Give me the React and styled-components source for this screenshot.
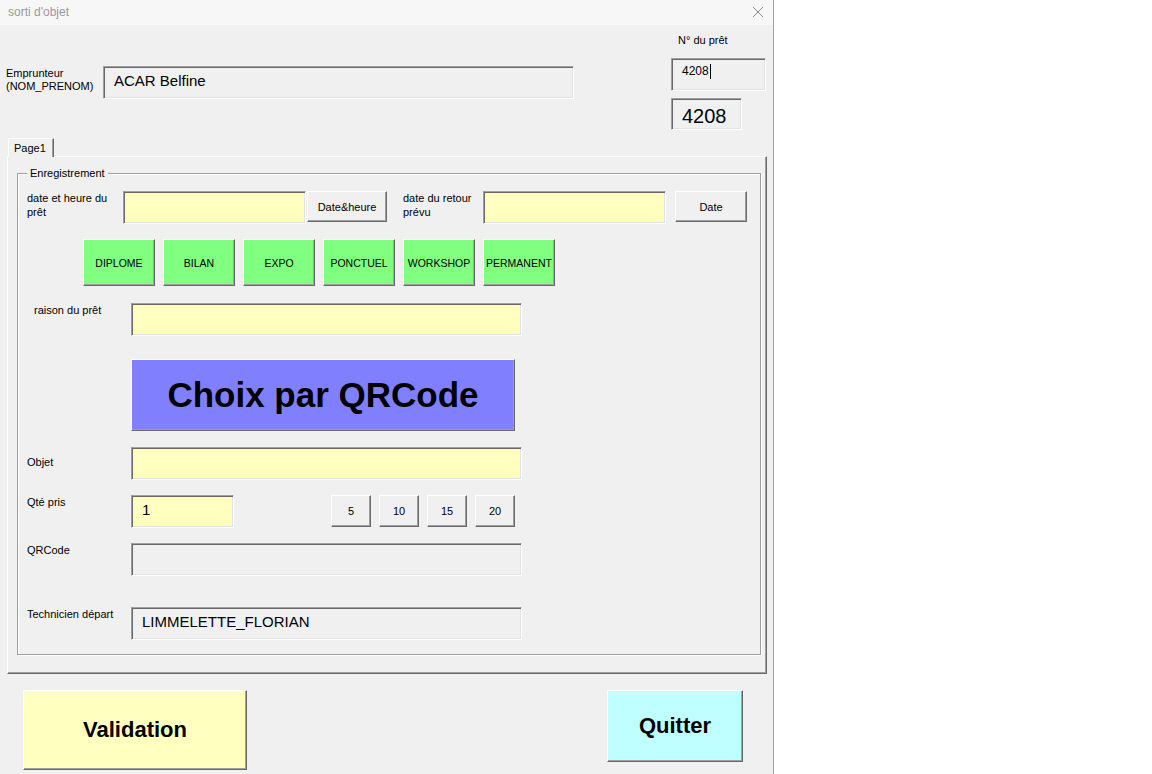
import React from "react";
import styled, { createGlobalStyle } from "styled-components";

// couleurs du formulaire VBA
const YELLOW = "#ffffc0";
const GREEN = "#80ff80";
const BLUE = "#8080ff";
const CYAN = "#c0ffff";
const FACE = "#f0f0f0";

const GlobalStyle = createGlobalStyle`
  html, body {
    margin: 0;
    padding: 0;
    background: #fff;
  }
  body {
    font-family: "Liberation Sans", Arial, sans-serif;
    color: #000;
  }
  * {
    box-sizing: border-box;
  }
`;

const categories = ["DIPLOME", "BILAN", "EXPO", "PONCTUEL", "WORKSHOP", "PERMANENT"];
const quantities = [5, 10, 15, 20];

const App = () => {
  return (
    <>
      <GlobalStyle />
      <Window>
        <TitleBar>
          <span>sorti d'objet</span>
          <svg width="12" height="12" viewBox="0 0 12 12">
            <path d="M1 1 L11 11 M11 1 L1 11" stroke="#8a8a8a" strokeWidth="1" fill="none" />
          </svg>
        </TitleBar>

        <Header>
          <Borrower>
            <Label $w={97} $lh={13} $pt={1}>
              Emprunteur
              <br />
              (NOM_PRENOM)
            </Label>
            <TextBox $w={471} $h={33} $size={15}>
              ACAR Belfine
            </TextBox>
          </Borrower>
          <LoanColumn>
            <Label $lh={13} $pl={7}>
              N° du prêt
            </Label>
            <TextBox $w={95} $h={33} $size={12} $mt={11}>
              4208
              <Caret />
            </TextBox>
            <TextBox $w={71} $h={32} $size={20} $mt={7}>
              4208
            </TextBox>
          </LoanColumn>
        </Header>

        <TabArea>
          <TabStrip>
            <Tab>Page1</Tab>
          </TabStrip>
          <TabPanel>
            <Frame>
              <Legend>Enregistrement</Legend>

              <Row>
                <Label $w={96}>
                  date et heure du
                  <br />
                  prêt
                </Label>
                <TextBox $w={183} $h={33} $bg={YELLOW} />
                <Button $w={80} $h={31} $ml={1}>
                  Date&amp;heure
                </Button>
                <Label $w={80} $ml={16}>
                  date du retour
                  <br />
                  prévu
                </Label>
                <TextBox $w={183} $h={33} $bg={YELLOW} />
                <Button $w={72} $h={31} $ml={9}>
                  Date
                </Button>
              </Row>

              <Row $mt={15} $pl={56} $gap={8}>
                {categories.map((c) => (
                  <Button key={c} $w={72} $h={47} $bg={GREEN} $size={10.5}>
                    {c}
                  </Button>
                ))}
              </Row>

              <Row $mt={17}>
                <Label $w={104} $pl={7}>
                  raison du prêt
                </Label>
                <TextBox $w={391} $h={33} $bg={YELLOW} />
              </Row>

              <Row $mt={23} $pl={104}>
                <Button $w={384} $h={72} $bg={BLUE} $size={35} $bold>
                  Choix par QRCode
                </Button>
              </Row>

              <Row $mt={16}>
                <Label $w={104} $pt={8}>
                  Objet
                </Label>
                <TextBox $w={391} $h={33} $bg={YELLOW} />
              </Row>

              <Row $mt={15}>
                <Label $w={104}>Qté pris</Label>
                <TextBox $w={103} $h={33} $bg={YELLOW} $size={15}>
                  1
                </TextBox>
                <QtyGroup>
                  {quantities.map((q) => (
                    <Button key={q} $w={40} $h={32}>
                      {q}
                    </Button>
                  ))}
                </QtyGroup>
              </Row>

              <Row $mt={15}>
                <Label $w={104}>QRCode</Label>
                <TextBox $w={391} $h={33} />
              </Row>

              <Row $mt={31}>
                <Label $w={104}>Technicien départ</Label>
                <TextBox $w={391} $h={33} $size={15}>
                  LIMMELETTE_FLORIAN
                </TextBox>
              </Row>
            </Frame>
          </TabPanel>
        </TabArea>

        <BottomBar>
          <Button $w={224} $h={80} $bg={YELLOW} $size={22} $bold>
            Validation
          </Button>
          <Button $w={136} $h={72} $bg={CYAN} $size={22} $bold $ml={360}>
            Quitter
          </Button>
        </BottomBar>
      </Window>
    </>
  );
};

// Styles
const Window = styled.div`
  width: 774px;
  height: 774px;
  background: ${FACE};
  border-right: 1px solid #a0a0a0;
  display: flex;
  flex-direction: column;
  overflow: hidden;
`;

const TitleBar = styled.div`
  height: 25px;
  flex-shrink: 0;
  background: #f7f7f7;
  display: flex;
  align-items: center;
  justify-content: space-between;
  padding: 0 9px 2px 8px;
  font-size: 12px;
  color: #9a9a9a;
`;

const Header = styled.div`
  height: 113px;
  flex-shrink: 0;
  display: flex;
  padding-left: 6px;
`;

const Borrower = styled.div`
  display: flex;
  align-items: flex-start;
  margin-top: 41px;
`;

const LoanColumn = styled.div`
  display: flex;
  flex-direction: column;
  align-items: flex-start;
  margin-left: 97px;
  padding-top: 9px;
`;

const Label = styled.div`
  flex-shrink: 0;
  width: ${(p) => (p.$w ? `${p.$w}px` : "auto")};
  margin-left: ${(p) => p.$ml || 0}px;
  padding-top: ${(p) => p.$pt || 0}px;
  padding-left: ${(p) => p.$pl || 0}px;
  font-size: 11px;
  line-height: ${(p) => p.$lh || 14}px;
`;

const TextBox = styled.div`
  flex-shrink: 0;
  width: ${(p) => p.$w}px;
  height: ${(p) => p.$h}px;
  margin-top: ${(p) => p.$mt || 0}px;
  background: ${(p) => p.$bg || FACE};
  border: 1px solid;
  border-color: #a0a0a0 #fff #fff #a0a0a0;
  box-shadow: inset 1px 1px 0 #696969, inset -1px -1px 0 #e3e3e3;
  padding: 5px 10px 0;
  display: flex;
  align-items: flex-start;
  font-size: ${(p) => p.$size || 12}px;
  line-height: ${(p) => Math.round((p.$size || 12) * 1.2)}px;
  white-space: nowrap;
`;

const Caret = styled.span`
  display: inline-block;
  width: 1px;
  height: 15px;
  background: #000;
  margin-left: 1px;
`;

const Button = styled.div`
  flex-shrink: 0;
  width: ${(p) => p.$w}px;
  height: ${(p) => p.$h}px;
  margin-left: ${(p) => p.$ml || 0}px;
  background: ${(p) => p.$bg || FACE};
  border: 1px solid;
  border-color: #fff #696969 #696969 #fff;
  box-shadow: inset -1px -1px 0 #a0a0a0;
  display: flex;
  align-items: center;
  justify-content: center;
  font-size: ${(p) => p.$size || 11}px;
  font-weight: ${(p) => (p.$bold ? 700 : 400)};
  white-space: nowrap;
  cursor: default;
`;

const TabArea = styled.div`
  margin-left: 7px;
  width: 760px;
  flex-shrink: 0;
`;

const TabStrip = styled.div`
  height: 18px;
  display: flex;
  padding-left: 1px;
`;

const Tab = styled.div`
  position: relative;
  z-index: 1;
  width: 46px;
  height: 19px;
  background: ${FACE};
  border-top: 1px solid #fff;
  border-left: 1px solid #fff;
  border-right: 1px solid #696969;
  box-shadow: inset -1px 0 0 #a0a0a0;
  padding: 2px 0 0 5px;
  font-size: 11px;
  line-height: 14px;
`;

const TabPanel = styled.div`
  height: 518px;
  border-top: 1px solid #fff;
  border-left: 1px solid #fff;
  border-right: 1px solid #696969;
  border-bottom: 1px solid #696969;
  box-shadow: inset -1px -1px 0 #a0a0a0;
  padding: 16px 0 0 9px;
`;

const Frame = styled.div`
  position: relative;
  width: 744px;
  height: 482px;
  border: 1px solid #a0a0a0;
  box-shadow: inset 1px 1px 0 #fff, 1px 1px 0 #fff;
  padding: 17px 0 0 9px;
`;

const Legend = styled.div`
  position: absolute;
  top: -7px;
  left: 9px;
  padding: 0 3px;
  background: ${FACE};
  font-size: 11px;
  line-height: 13px;
`;

const Row = styled.div`
  display: flex;
  align-items: flex-start;
  margin-top: ${(p) => p.$mt || 0}px;
  padding-left: ${(p) => p.$pl || 0}px;
  gap: ${(p) => p.$gap || 0}px;
`;

const QtyGroup = styled.div`
  display: flex;
  gap: 8px;
  margin-left: 97px;
`;

const BottomBar = styled.div`
  display: flex;
  align-items: flex-start;
  padding: 16px 0 0 23px;
`;

export default App;
